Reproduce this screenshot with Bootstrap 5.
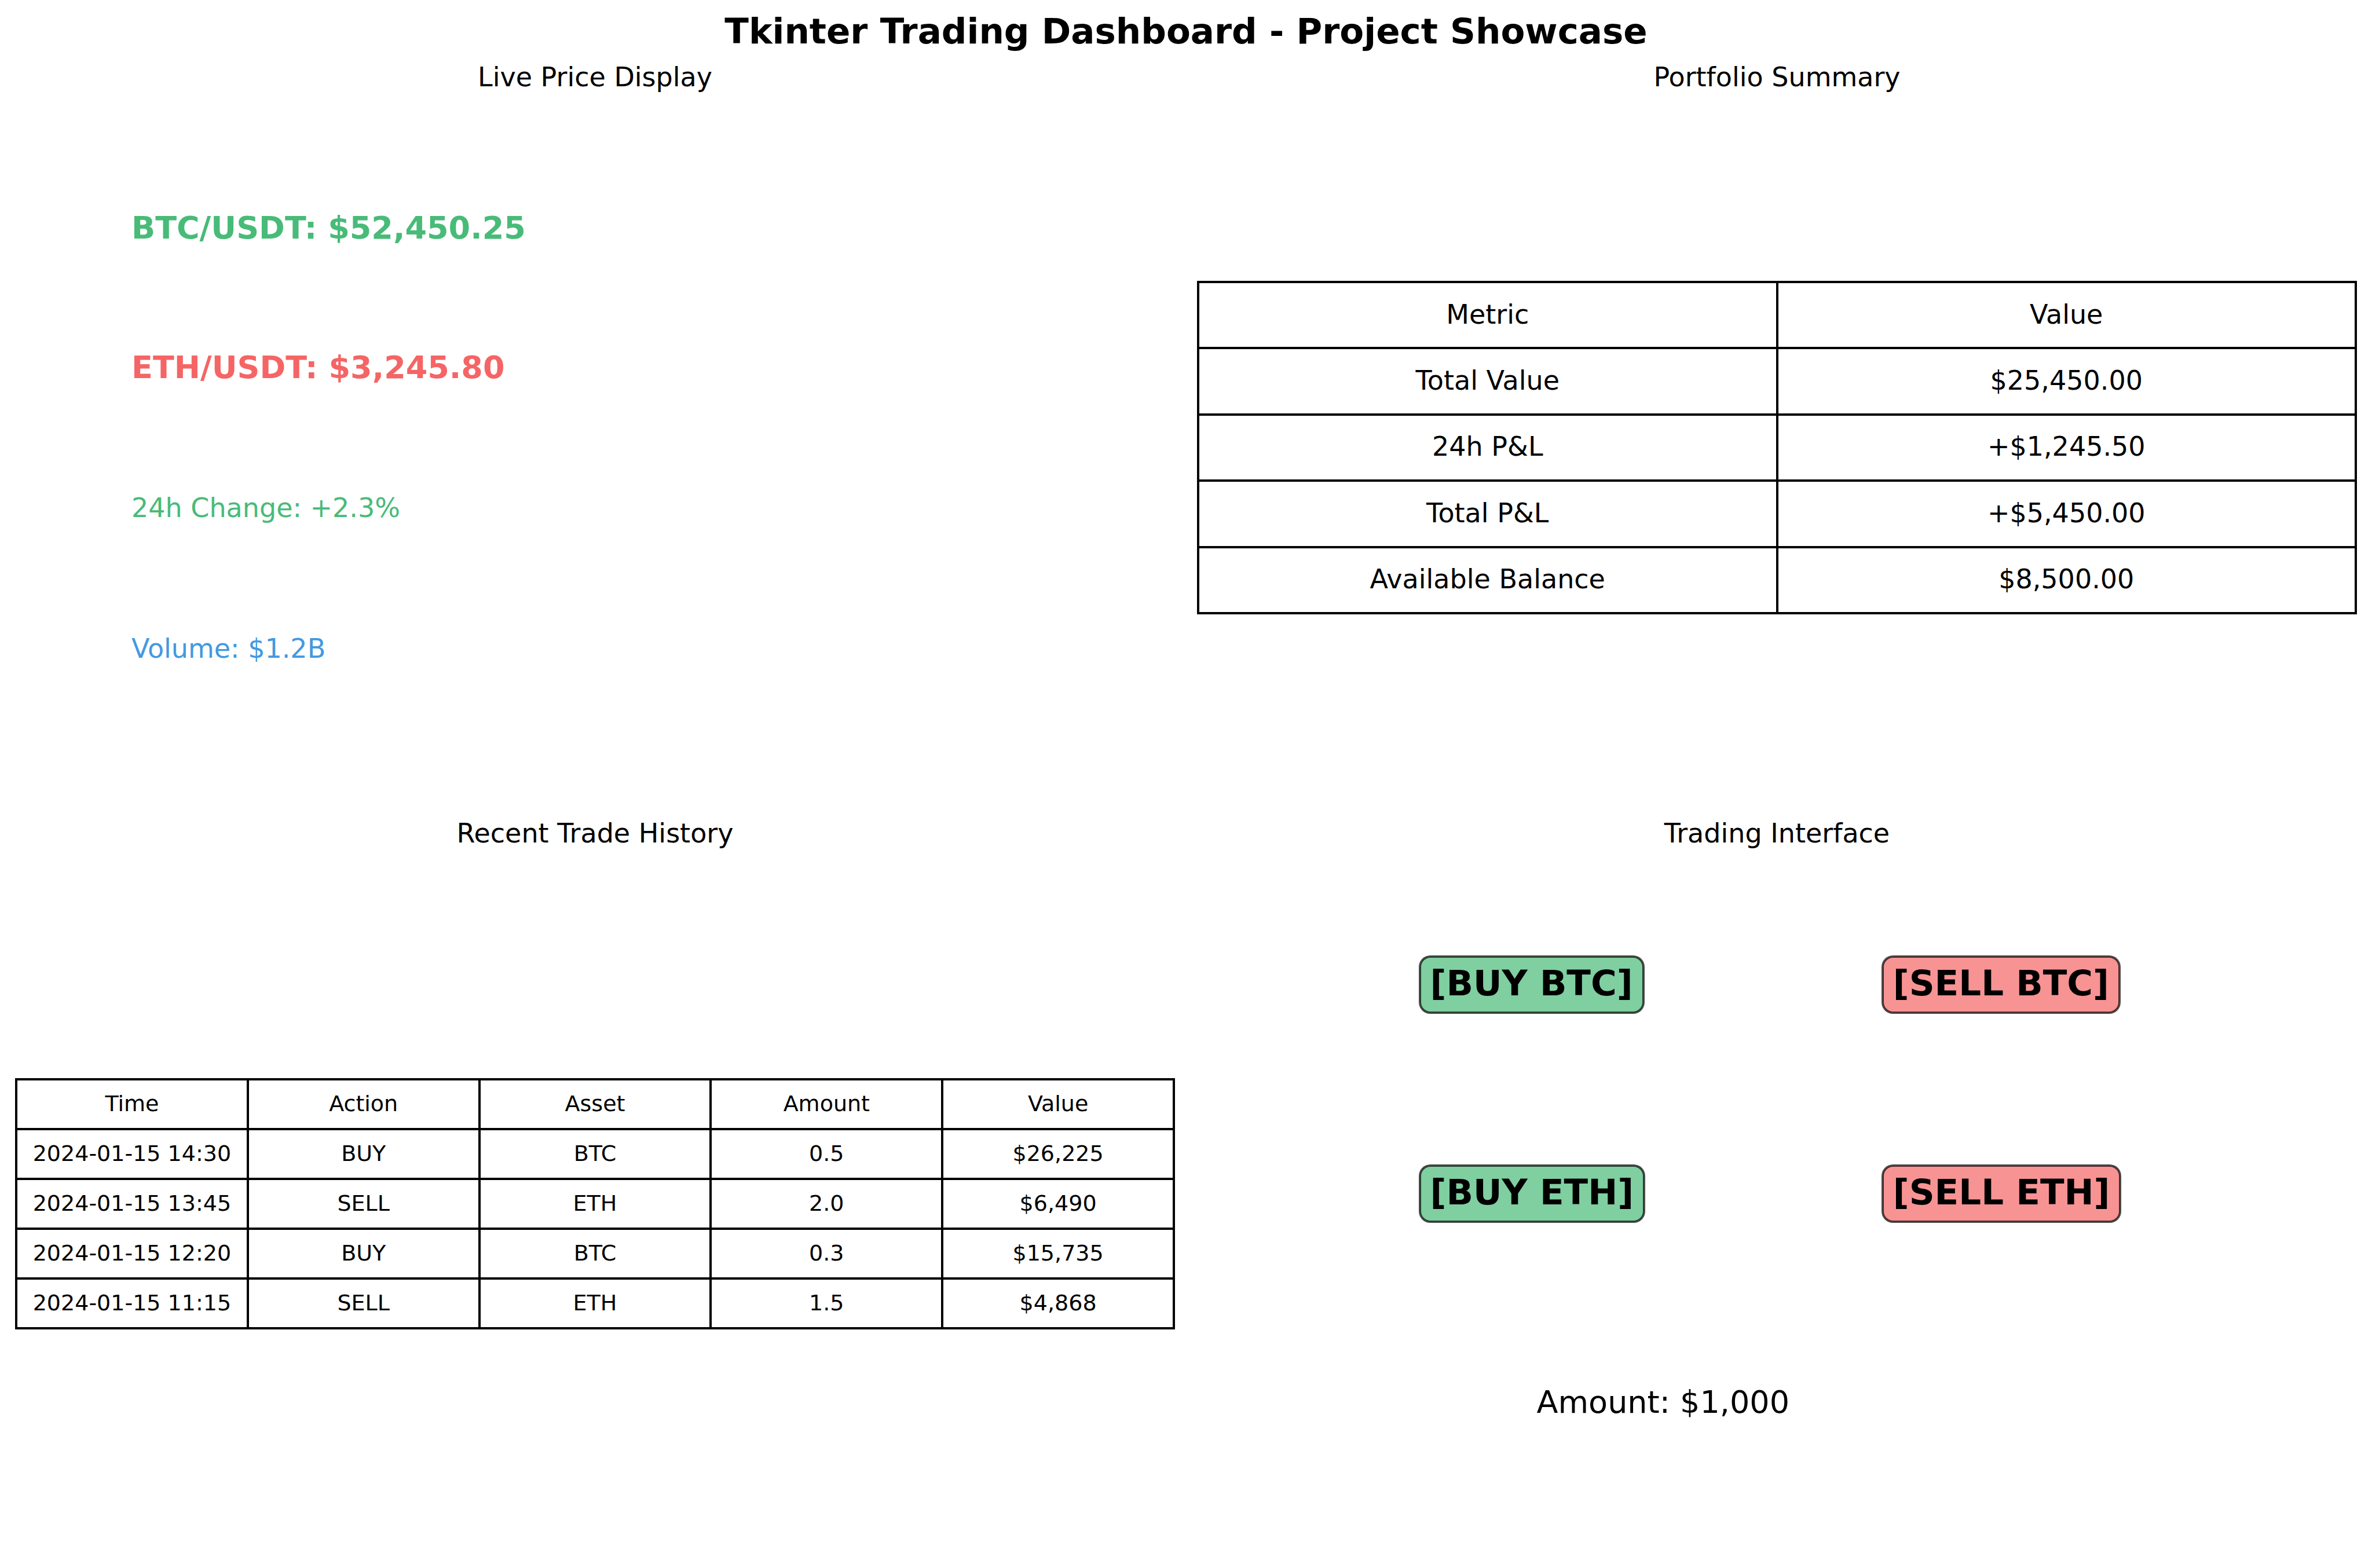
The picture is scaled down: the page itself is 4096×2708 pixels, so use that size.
<!DOCTYPE html>
<html lang="en">
<head>
<meta charset="utf-8">
<meta name="viewport" content="width=device-width, initial-scale=1">
<title>Tkinter Trading Dashboard - Project Showcase</title>
<link href="https://cdn.jsdelivr.net/npm/bootstrap@5.3.0/dist/css/bootstrap.min.css" rel="stylesheet">
<style>
  body { font-family: "DejaVu Sans", sans-serif; color: #000; background: #fff; }
  .page-head { padding: 18px 0 14px; }
  .page-title { font-size: 61px; line-height: 72px; }
  .board { padding: 0 26px; }
  .board-row { --bs-gutter-x: 38px; }
  .panel-title { font-size: 46px; line-height: 58px; font-weight: 400; }

  /* live prices */
  .ticker { gap: 181px; padding: 202px 0 259px 201px; }
  .ticker-pair { font-size: 54px; line-height: 60px; }
  .ticker-stat { font-size: 46px; line-height: 62px; }
  .tone-up { color: #48bb78; }
  .tone-down { color: #f56565; }
  .tone-info { color: #4299e1; }

  /* tables */
  .sheet { table-layout: fixed; border-collapse: collapse; color: #000; }
  .sheet th, .sheet td { border: 4px solid #000; font-weight: 400; vertical-align: middle; }
  .sheet-summary { margin-top: 323px; height: 576px; font-size: 46px; line-height: 54px; }
  .sheet-summary th, .sheet-summary td { height: 114px; }
  .sheet-history { margin-top: 394px; height: 434px; font-size: 38px; line-height: 44px; }
  .sheet-history th, .sheet-history td { height: 86px; }
  .sheet > :not(caption) > * > * { padding: 0 0 3px; color: #000; }

  /* order buttons */
  .orders { padding: 184px 0 0 19.2%; }
  .orders-grid { grid-template-columns: 800fr 820fr; row-gap: 264px; }
  .order-btn {
    --bs-btn-color: #000;
    --bs-btn-hover-color: #000;
    --bs-btn-border-color: rgba(0, 0, 0, .7);
    --bs-btn-hover-border-color: rgba(0, 0, 0, .7);
    --bs-btn-border-width: 2px;
    --bs-btn-border-radius: 18px;
    --bs-btn-padding-x: 16px;
    --bs-btn-font-size: 61px;
    --bs-btn-line-height: 71px;
    padding-top: 8px;
    padding-bottom: 14px;
    box-shadow: 0 0 0 2px #4d4d4d;
  }
  .order-buy { --bs-btn-bg: #7fcfa0; --bs-btn-hover-bg: #6cc591; }
  .order-sell { --bs-btn-bg: #f89393; --bs-btn-hover-bg: #f67f7f; }
  .order-amount { font-size: 54px; line-height: 62px; margin-top: 281px; padding-left: 202px; }
</style>
</head>
<body>
<header class="page-head text-center">
  <h1 class="page-title fw-bold m-0">Tkinter Trading Dashboard - Project Showcase</h1>
</header>

<main class="container-fluid board">
  <div class="row board-row">
    <section class="col-6">
      <h2 class="panel-title text-center m-0">Live Price Display</h2>
      <ul class="ticker list-unstyled d-flex flex-column m-0">
        <li class="ticker-pair fw-bold tone-up">BTC/USDT: $52,450.25</li>
        <li class="ticker-pair fw-bold tone-down">ETH/USDT: $3,245.80</li>
        <li class="ticker-stat tone-up">24h Change: +2.3%</li>
        <li class="ticker-stat tone-info">Volume: $1.2B</li>
      </ul>
    </section>

    <section class="col-6">
      <h2 class="panel-title text-center m-0">Portfolio Summary</h2>
      <table class="table sheet sheet-summary text-center mb-0">
        <thead>
          <tr><th scope="col">Metric</th><th scope="col">Value</th></tr>
        </thead>
        <tbody>
          <tr><td>Total Value</td><td>$25,450.00</td></tr>
          <tr><td>24h P&amp;L</td><td>+$1,245.50</td></tr>
          <tr><td>Total P&amp;L</td><td>+$5,450.00</td></tr>
          <tr><td>Available Balance</td><td>$8,500.00</td></tr>
        </tbody>
      </table>
    </section>
  </div>

  <div class="row board-row">
    <section class="col-6">
      <h2 class="panel-title text-center m-0">Recent Trade History</h2>
      <table class="table sheet sheet-history text-center mb-0">
        <thead>
          <tr><th scope="col">Time</th><th scope="col">Action</th><th scope="col">Asset</th><th scope="col">Amount</th><th scope="col">Value</th></tr>
        </thead>
        <tbody>
          <tr><td>2024-01-15 14:30</td><td>BUY</td><td>BTC</td><td>0.5</td><td>$26,225</td></tr>
          <tr><td>2024-01-15 13:45</td><td>SELL</td><td>ETH</td><td>2.0</td><td>$6,490</td></tr>
          <tr><td>2024-01-15 12:20</td><td>BUY</td><td>BTC</td><td>0.3</td><td>$15,735</td></tr>
          <tr><td>2024-01-15 11:15</td><td>SELL</td><td>ETH</td><td>1.5</td><td>$4,868</td></tr>
        </tbody>
      </table>
    </section>

    <section class="col-6">
      <h2 class="panel-title text-center m-0">Trading Interface</h2>
      <div class="orders">
        <div class="orders-grid d-grid">
          <div><button type="button" class="btn order-btn order-buy fw-bold d-block">[BUY BTC]</button></div>
          <div><button type="button" class="btn order-btn order-sell fw-bold d-block">[SELL BTC]</button></div>
          <div><button type="button" class="btn order-btn order-buy fw-bold d-block">[BUY ETH]</button></div>
          <div><button type="button" class="btn order-btn order-sell fw-bold d-block">[SELL ETH]</button></div>
        </div>
        <p class="order-amount mb-0">Amount: $1,000</p>
      </div>
    </section>
  </div>
</main>
<script src="https://cdn.jsdelivr.net/npm/bootstrap@5.3.0/dist/js/bootstrap.bundle.min.js"></script>
</body>
</html>
